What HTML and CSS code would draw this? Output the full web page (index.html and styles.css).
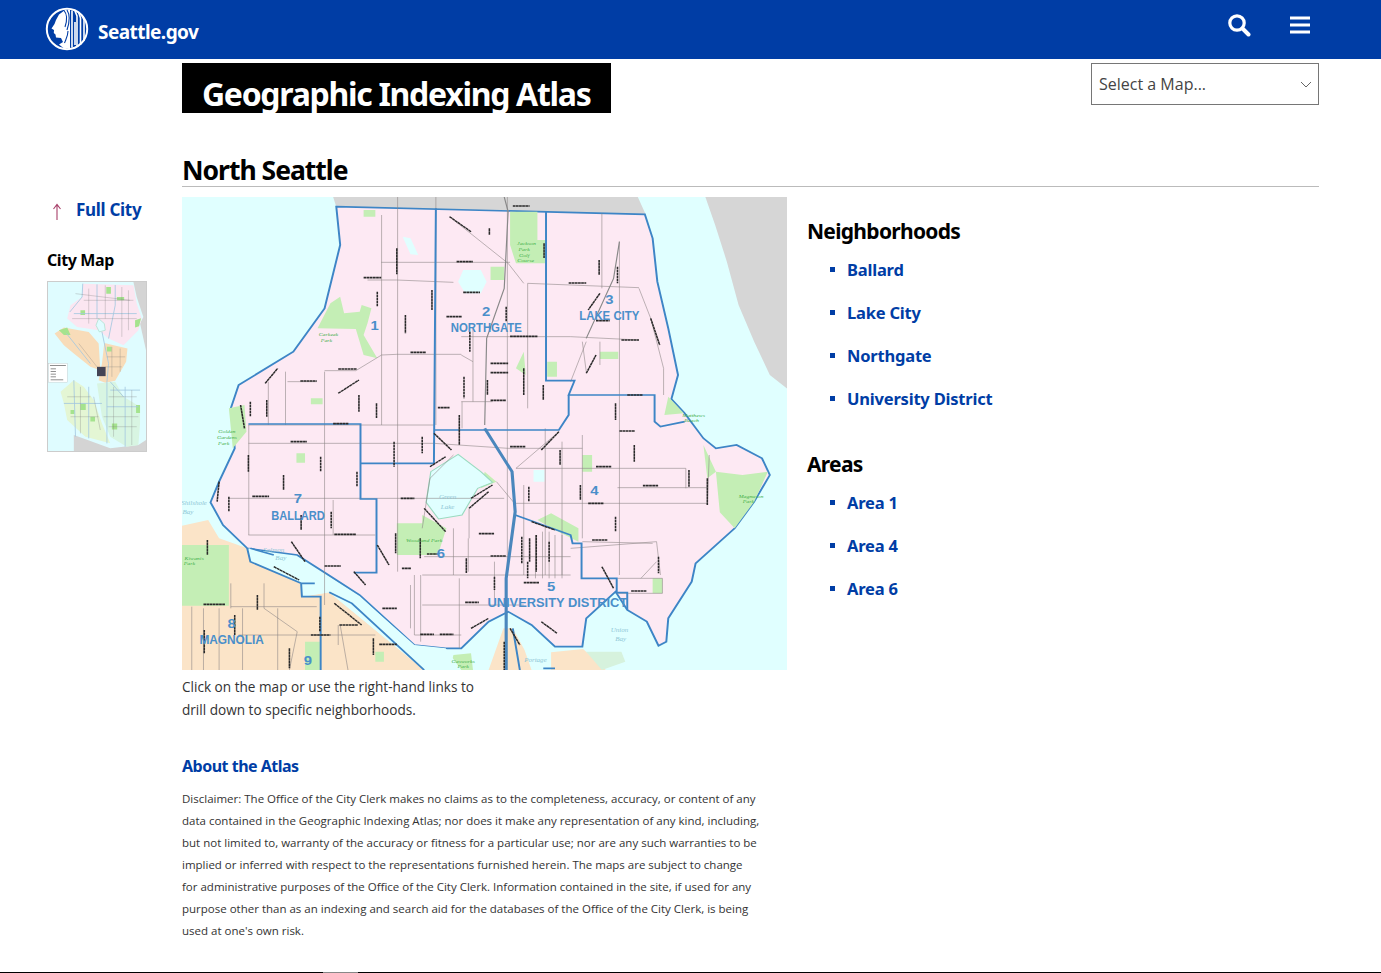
FILE: index.html
```html
<!DOCTYPE html>
<html lang="en">

<head>
    <meta charset="UTF-8">
    <meta name="viewport" content="width=device-width, initial-scale=1.0">
    <title>Geographic Indexing Atlas</title>
    <link rel="stylesheet" href="styles.css">
</head>

<body>
    <header class="topbar">
        <a class="brand" href="#">
            <svg class="seal" viewBox="0 0 44 44" width="44" height="44" aria-hidden="true">
                <circle cx="22" cy="22" r="20.2" fill="none" stroke="#fff" stroke-width="2"/>
                <path fill="#fff" d="M20 3 L14 7.5 L11 13 L9.5 17 L6.5 21.5 L9 23 L8.8 26 L10.5 27.5 L11 30.5 L16 31 L18 35 L14 37.5 L19 41.5 L25 41.5 L25 3 Z"/>
                <path fill="none" stroke="#003da5" stroke-width="1.1" d="M19 3.5 C23 8 22 14 20 20 M22 3 C26 9 24 17 22 23 M19.5 36 C21 32 23 29 23 24"/>
                <path fill="none" stroke="#fff" stroke-width="1.6" d="M27 3.5 V40.5 M30 4 L32 9 V40 M33.5 5 L35.5 11 V38 M37 8 L39 13 V34 M30 15 V38"/>
            </svg>
            <span class="brand-name">Seattle.gov</span>
        </a>
        <div class="topbar-icons">
            <svg viewBox="0 0 24 24" width="24" height="24" aria-hidden="true">
                <circle cx="10" cy="10" r="7.2" fill="none" stroke="#fff" stroke-width="3.2"/>
                <path d="M15.5 15.5 L21.5 21.5" stroke="#fff" stroke-width="4" stroke-linecap="round"/>
            </svg>
            <svg viewBox="0 0 20 18" width="20" height="18" aria-hidden="true">
                <path d="M0 2 H20 M0 9 H20 M0 16 H20" stroke="#fff" stroke-width="3"/>
            </svg>
        </div>
    </header>

    <div class="page">
        <aside class="sidebar">
            <a class="full-city" href="#">
                <svg class="arrow" viewBox="0 0 12 18" width="12" height="18" aria-hidden="true">
                    <path d="M6 17 V2 M2.5 6 L6 1.5 L9.500 6" fill="none" stroke="#a8406a" stroke-width="1.1"/>
                </svg>
                Full City
            </a>
            <h3 class="side-title">City Map</h3>
            <svg class="thumb" viewBox="52 275 296 508" width="100" height="171" preserveAspectRatio="none" aria-hidden="true">
                <rect x="52" y="275" width="296" height="508" fill="#dffcff"/>
                <path fill="#d4d4d4" d="M310 275 H348 V480 L330 400 L340 380 L320 320 Z M130 735 L240 775 L325 765 L348 750 V783 H130 Z"/>
                <path fill="#fbe6f1" d="M157 280 L310 285 L320 340 L335 385 L325 420 L280 465 L235 445 L205 420 L140 410 L110 385 L120 345 L155 320 Z"/>
                <path fill="#f8dcb9" d="M72 430 L100 412 L175 425 L205 460 L210 540 L180 530 L130 490 L100 465 Z M222 458 L292 475 L288 515 L255 572 L225 578 L205 570 L215 520 Z"/>
                <path fill="#e4f6d4" d="M90 605 L130 570 L160 590 L190 630 L215 700 L240 760 L165 740 L110 690 L100 640 Z"/>
                <path fill="#d8f5e2" d="M200 580 L255 575 L280 620 L330 650 L330 700 L325 765 L290 770 L240 740 L215 680 Z"/>
                <path fill="#a5e38e" d="M228 290 h14 v20 h-14 Z M260 320 h22 v10 h-22 Z M315 390 l18 -6 l-6 24 l-12 4 Z M85 420 l25 -8 l10 22 h-20 Z M150 640 h16 v20 h-16 Z M318 645 h12 v24 h-12 Z M245 700 h16 v18 h-16 Z M180 680 h14 v14 h-14 Z M150 360 h14 v14 h-14 Z M230 470 h14 v14 h-14 Z M120 660 h12 v12 h-12 Z"/>
                <path fill="#dffcff" stroke="#8fd5b8" stroke-width="1.5" d="M205 385 L222 400 L225 420 L207 425 L197 405 Z"/>
                <path fill="none" stroke="#a3c8df" stroke-width="2.500" d="M157 280 L155 320 L118 365 M200 282 V385 M255 284 V345 L235 445 M215 425 L235 520 L230 575 V760 M130 370 H320 M108 430 L180 520 M240 575 L280 620 M130 570 L135 740 M175 590 V745 M285 590 V770 M330 600 H240 M100 640 H215 M230 650 H325"/>
                <path fill="none" stroke="#7a7a7a" stroke-width=".9" d="M175 295 V400 M225 285 V385 M275 290 V440 M295 300 V420 M125 385 H320 M160 330 H310 M145 460 L200 530 M245 470 V560 M270 475 V545 M230 500 H285 M225 530 H275 M110 620 H180 M120 680 H205 M150 590 V730 M190 620 L210 720 M250 590 V740 M305 600 V765 M235 620 H320 M235 710 H320 M220 680 H325 M135 310 L300 330"/>
                <path fill="#445" d="M200 530 h26 v28 h-26 Z"/>
                <rect x="54" y="520" width="56" height="56" fill="#fff" stroke="#bbb"/>
                <path stroke="#555" stroke-width="2" d="M58 526 H106 M60 536 H76 M60 544 H76 M60 552 H76 M60 560 H76 M60 569 H98"/>
            </svg>
        </aside>

        <main class="content">
            <div class="title-row">
                <h1 class="atlas-title">Geographic Indexing Atlas</h1>
                <div class="map-select">
                    <select aria-label="Select a Map">
                        <option>Select a Map...</option>
                    </select>
                    <svg class="chevron" viewBox="0 0 12 7" width="12" height="7" aria-hidden="true">
                        <path d="M1 1 L6 6 L11 1" fill="none" stroke="#666" stroke-width="1"/>
                    </svg>
                </div>
            </div>

            <h2 class="region-title">North Seattle</h2>

            <div class="region">
                <div class="map-col">
                    <svg class="map" viewBox="5 6 1549 1419" width="605" height="473" preserveAspectRatio="none" aria-label="Map of North Seattle">
                        <rect x="0" y="0" width="1560" height="1430" fill="#e0ffff"/>
                        <!-- grey land -->
                        <path fill="#d6d6d6" d="M392 6 H1172 L1192 58 L400 35 Z M1345 6 H1556 V582 L1510 540 L1470 440 L1430 330 L1400 200 L1370 90 Z"/>
                        <!-- magnolia + queen anne side -->
                        <path fill="#fbe4c8" d="M5 992 L72 975 L100 1030 L172 1060 L180 1100 L310 1165 L312 1205 L382 1192 L625 1425 H5 Z M790 1425 L828 1300 L852 1300 L882 1365 L900 1425 Z M950 1425 V1372 L1032 1362 L1090 1425 Z"/>
                        <!-- north seattle land -->
                        <path fill="#fde9f3" stroke="#3d85c6" stroke-width="5" d="M400 35 L1190 58 L1210 130 L1222 260 L1250 400 L1275 540 L1258 612 L1292 655 L1340 730 L1372 760 L1425 750 L1490 790 L1510 840 L1470 920 L1420 1000 L1320 1105 L1310 1160 L1250 1270 L1245 1340 L1225 1352 L1195 1280 L1145 1245 L1115 1190 L1040 1270 L1030 1355 L960 1355 L900 1290 L840 1250 L790 1280 L720 1360 L680 1360 L600 1350 L460 1200 L380 1140 L300 1080 L172 1060 L110 990 L78 922 L100 860 L140 760 L130 640 L150 570 L290 470 L370 340 L410 150 Z"/>
                        <!-- parks -->
                        <path fill="#c4eeb5" d="M845 50 H915 V135 H935 V205 H860 L845 150 Z M352 400 L385 325 L410 305 L420 355 L460 350 L465 330 L490 340 L480 385 L470 420 L505 490 L470 480 L450 402 Z M555 985 H620 V960 L682 1000 L660 1080 H555 Z M1372 830 L1440 840 L1505 830 L1470 920 L1420 1000 L1382 952 Z M125 640 L165 630 L170 710 L135 760 Z M5 1050 H125 V1232 H5 Z M915 975 L950 955 L1020 1000 L1020 1040 L960 1005 Z M1075 470 H1122 V492 H1075 Z M1250 605 L1290 655 L1240 660 Z M298 775 h22 v28 h-22 Z M795 215 h35 v40 h-35 Z M335 610 h30 v18 h-30 Z M1030 780 h25 v50 h-25 Z M700 1380 L745 1375 L750 1425 H690 Z M320 1340 h38 v85 h-38 Z M780 830 L810 860 L770 880 Z M1210 1150 h25 v45 h-25 Z M500 1370 h22 v30 h-22 Z M470 45 h30 v20 h-30 Z M880 470 L860 520 L885 540 Z M940 500 h25 v45 h-25 Z M1340 750 L1372 830 L1350 850 Z"/>
                        <path fill="#d6f2dd" d="M1040 1370 L1130 1370 L1140 1400 L1080 1425 Z"/>
                        <!-- water inside land -->
                        <path fill="#e0ffff" stroke="#9adbc0" stroke-width="3" d="M712 778 L770 830 L800 862 L762 880 L722 960 L662 972 L630 922 L642 830 Z"/>
                        <path fill="#e0ffff" d="M570 125 L590 130 L610 180 L590 178 Z M905 825 h28 v35 h-28 Z M725 225 H770 L785 260 L770 295 H730 L712 260 Z"/>
                        <path fill="#e0ffff" d="M175 1060 L240 1075 L300 1090 L380 1145 L460 1205 L600 1350 L680 1360 L720 1425 H625 L382 1192 L312 1205 L310 1165 L180 1100 Z"/>
                        <!-- roads -->
                        <path fill="none" stroke="#8d8585" stroke-width="1.6" d="M516 60 V690 M557 6 V1130 M655 6 V690 M838 6 V1140 M1080 55 V280 M1125 140 V1140 M722 620 V700 M370 530 V1230 M176 690 V1020 M392 915 V1020 M270 530 V690 M226 560 V690 M750 400 V620 M890 265 V640 M935 700 V1140 M978 740 V1140 M1030 440 L1040 530 M1030 720 V1030 M1075 440 V510 M1175 280 L1205 370 L1238 520 V600 M700 1000 V1140 M738 1030 V1130 M880 870 V1140 M910 1020 V1150 M928 1010 V1150 M945 1010 V1150 M960 1020 V1150 M978 1020 V1150 M600 1140 V1320 M616 1140 V1340 M715 1150 V1360 M590 1170 V1300 M805 1100 V1210 M175 745 L225 745 H650 L840 760 H1030 M515 202 H845 M480 255 H555 L700 262 M890 265 L1175 278 M720 425 H1000 L1175 435 M555 478 H720 M370 527 H450 L516 480 L555 478 M275 560 H350 M175 690 H650 M860 820 H1295 M1120 878 H1350 M125 910 H830 M860 925 H1350 M175 1020 H500 M625 1085 H1000 M620 1140 H1000 M1030 1040 L1210 1045 M720 620 H800 M1120 1150 H1235 V1195 H1120 M620 1230 H880 M600 1320 H720 M130 1235 H350 M150 1320 H500 M405 1290 V1350 M215 1240 L300 1310 L280 1425 M130 1165 V1240 M30 1235 V1425 M880 265 L840 205 M750 500 L720 480 M1000 560 L1040 440 M1295 820 V880 M1355 780 L1350 930 M700 780 L640 850 L620 1000 M860 820 L960 720 M810 860 L860 930 M740 940 L740 1030 M1000 1060 L1220 1040 L1230 1140 M1180 1150 L1220 1100 M690 65 L840 205 M215 1165 V1240 M60 1240 V1425 M100 1240 V1425 M160 1240 V1425 M250 1240 V1425 M410 1290 L430 1425"/>
                        <path fill="none" stroke="#888" stroke-width="3" d="M830 6 L840 50 L830 280 L785 430 L780 690 M1125 140 L1110 250 L1040 430"/>
                        <!-- boundaries -->
                        <path fill="none" stroke="#3d85c6" stroke-width="5" d="M655 40 L650 805 H462 V687 H175 M937 50 V557 H1010 L995 600 H1215 V680 L1230 695 L1292 680 M995 600 V660 L970 705 H650 M462 805 V912 H503 V1133 H445 M858 960 L1000 1020 L1005 1045 H1028 V1150 H1118 V1193 H1145 V1245 M172 1060 L180 1100 L310 1165 L312 1205 H360 V1425 M310 1165 H345 M180 1060 L240 1080 M382 1192 L440 1225 L625 1425 M870 1425 L852 1300 M930 1420 H960"/>
                        <path fill="none" stroke="#4a87bd" stroke-width="8" d="M780 700 L850 830 L858 950 L835 1150 V1425"/>
                        <!-- street labels -->
                        <path class="street h" d="M470 248 h45 M708 200 h42 M725 292 h43 M682 365 h40 M590 472 h40 M405 522 h47 M308 558 h42 M392 686 h40 M283 740 h42 M845 755 h40 M845 424 h70 M1130 435 h45 M995 264 h45 M1065 377 h35 M1145 600 h40 M1125 708 h40 M1065 815 h40 M1185 872 h40 M1045 925 h40 M1055 1035 h40 M185 904 h43 M395 1018 h55 M370 1113 h42 M765 1016 h40 M565 910 h35 M632 1077 h28 M795 1083 h40 M568 1120 h24 M880 1163 h40 M730 1222 h35 M518 1240 h37 M1155 1188 h40 M60 1228 h55 M335 1320 h50 M615 1318 h35 M665 1318 h35 M510 1348 h45 M408 1290 h47 M660 638 h30 M795 505 h45 M795 533 h45 M795 616 h40 M852 33 h43"/>
                        <path class="street" d="M555 160 v78 M505 290 v45 M645 285 v60 M577 360 v55 M742 410 v60 M835 335 v45 M1073 195 v45 M1120 215 v50 M932 145 v45 M792 100 v20 M727 545 v65 M787 555 v45 M880 520 v80 M930 570 v45 M458 600 v50 M503 625 v45 M222 615 v50 M180 620 v45 M175 780 v50 M265 840 v45 M360 785 v45 M453 830 v45 M125 905 v45 M548 740 v75 M620 725 v50 M715 660 v90 M973 765 v45 M893 875 v45 M1025 870 v45 M1115 625 v50 M1163 750 v50 M1303 825 v50 M1350 850 v80 M1115 965 v45 M310 960 v45 M387 950 v50 M552 1015 v60 M615 1030 v60 M733 1090 v45 M805 1145 v40 M890 1100 v50 M945 1040 v60 M70 1035 v45 M140 1260 v60 M62 1305 v70 M198 1200 v45 M280 1360 v60 M358 1265 v45 M495 1330 v50 M1225 1085 v50 M875 1025 v80 M895 1030 v70 M912 1020 v110"/>
                        <path class="street" d="M690 65 L745 110 M405 595 L458 555 M218 565 L250 520 M1075 295 L1045 345 M1205 370 L1228 450 M1040 535 L1065 480 M925 765 L970 710 M650 715 L695 765 M640 815 L680 785 M1080 1115 L1110 1180 M900 980 L960 1005 M285 1040 L320 1100 M445 1130 L475 1170 M240 1115 L305 1155 M395 1225 L465 1290 M625 940 L680 1010 M745 910 L800 870 M740 940 L790 890 M505 1050 L535 1110 M745 1300 L790 1270 M925 1280 L965 1315 M155 630 L165 700 M100 860 L95 920 M845 1300 L870 1350 M830 1340 V1425"/>
                        <!-- labels -->
                        <g class="map-num">
                            <text x="498" y="405">1</text>
                            <text x="784" y="362">2</text>
                            <text x="1099" y="327">3</text>
                            <text x="1061" y="900">4</text>
                            <text x="950" y="1188">5</text>
                            <text x="668" y="1088">6</text>
                            <text x="302" y="925">7</text>
                            <text x="132" y="1300">8</text>
                            <text x="327" y="1410">9</text>
                        </g>
                        <g class="map-name">
                            <text x="784" y="411" textLength="182" lengthAdjust="spacingAndGlyphs">NORTHGATE</text>
                            <text x="1099" y="376" textLength="154" lengthAdjust="spacingAndGlyphs">LAKE CITY</text>
                            <text x="302" y="974" textLength="137" lengthAdjust="spacingAndGlyphs">BALLARD</text>
                            <text x="966" y="1237" textLength="358" lengthAdjust="spacingAndGlyphs">UNIVERSITY DISTRICT</text>
                            <text x="132" y="1347" textLength="165" lengthAdjust="spacingAndGlyphs">MAGNOLIA</text>
                        </g>
                        <g class="map-park">
                            <text x="887" y="150">Jackson</text>
                            <text x="881" y="168">Park</text>
                            <text x="881" y="185">Golf</text>
                            <text x="885" y="202">Course</text>
                            <text x="380" y="423">Carkeek</text>
                            <text x="375" y="440">Park</text>
                            <text x="120" y="715">Golden</text>
                            <text x="120" y="732">Gardens</text>
                            <text x="112" y="750">Park</text>
                            <text x="625" y="1040">Woodland Park</text>
                            <text x="1462" y="908">Magnuson</text>
                            <text x="1455" y="925">Park</text>
                            <text x="1315" y="665">Matthews</text>
                            <text x="1310" y="682">Beach</text>
                            <text x="36" y="1095">Kiwanis</text>
                            <text x="24" y="1110">Park</text>
                            <text x="725" y="1405">Gasworks</text>
                            <text x="725" y="1420">Park</text>
                        </g>
                        <g class="map-water">
                            <text x="685" y="912">Green</text>
                            <text x="685" y="942">Lake</text>
                            <text x="36" y="930">Shilshole</text>
                            <text x="20" y="958">Bay</text>
                            <text x="1125" y="1310">Union</text>
                            <text x="1128" y="1338">Bay</text>
                            <text x="240" y="1072">Salmon</text>
                            <text x="258" y="1095">Bay</text>
                            <text x="910" y="1402">Portage</text>
                        </g>
                    </svg>
                    <p class="caption">Click on the map or use the right-hand links to<br>drill down to specific neighborhoods.</p>
                    <a class="about" href="#">About the Atlas</a>
                    <p class="disclaimer">Disclaimer: The Office of the City Clerk makes no claims as to the completeness, accuracy, or content of any data contained in the Geographic Indexing Atlas; nor does it make any representation of any kind, including, but not limited to, warranty of the accuracy or fitness for a particular use; nor are any such warranties to be implied or inferred with respect to the representations furnished herein. The maps are subject to change for administrative purposes of the Office of the City Clerk. Information contained in the site, if used for any purpose other than as an indexing and search aid for the databases of the Office of the City Clerk, is being used at one's own risk.</p>
                </div>

                <nav class="links">
                    <h3 class="links-title">Neighborhoods</h3>
                    <ul class="link-list">
                        <li><a href="#">Ballard</a></li>
                        <li><a href="#">Lake City</a></li>
                        <li><a href="#">Northgate</a></li>
                        <li><a href="#">University District</a></li>
                    </ul>
                    <h3 class="links-title">Areas</h3>
                    <ul class="link-list">
                        <li><a href="#">Area 1</a></li>
                        <li><a href="#">Area 4</a></li>
                        <li><a href="#">Area 6</a></li>
                    </ul>
                </nav>
            </div>
        </main>
    </div>

    <footer class="footer-line"></footer>
</body>

</html>
```

FILE: styles.css
```css
* {
    box-sizing: border-box;
    margin: 0;
    padding: 0;
}

html,
body {
    height: 973px;
    overflow: hidden;
}

body {
    background: #fff;
    color: #333;
    font-family: 'Open Sans', 'Noto Sans', sans-serif;
    font-size: 13.6px;
    display: flex;
    flex-direction: column;
}

a {
    color: #003da5;
    text-decoration: none;
}

.topbar {
    height: 59px;
    flex: none;
    background: #003da5;
    display: flex;
    justify-content: space-between;
    padding: 7px 71px 0 45px;
}

.brand {
    display: flex;
    align-items: flex-start;
    gap: 9px;
    color: #fff;
}

.brand-name {
    font-family: 'Noto Sans', sans-serif;
    font-weight: 700;
    font-size: 19px;
    letter-spacing: -0.55px;
    line-height: 50px;
}

.topbar-icons {
    display: flex;
    gap: 39px;
    align-items: flex-start;
    padding-top: 6px;
}

.topbar-icons svg:last-child {
    margin-top: 3px;
}

.page {
    flex: 1;
    display: flex;
    min-height: 0;
}

.sidebar {
    width: 182px;
    flex: none;
    padding: 139px 0 0 47px;
}

.full-city {
    display: flex;
    align-items: center;
    gap: 13px;
    padding-left: 4px;
    font-family: 'Noto Sans', sans-serif;
    font-weight: 700;
    font-size: 17px;
    line-height: 24px;
    letter-spacing: -0.3px;
}

.arrow {
    flex: none;
    margin-top: 3px;
}

.side-title {
    margin-top: 27px;
    color: #000;
    font-family: 'Noto Sans', sans-serif;
    font-size: 16px;
    font-weight: 700;
    line-height: 22px;
    letter-spacing: -0.4px;
}

.thumb {
    display: block;
    margin-top: 10px;
    border: 1px solid #ccc;
}

.content {
    flex: 1;
    padding: 4px 62px 0 0;
}

.title-row {
    display: flex;
    justify-content: space-between;
    align-items: flex-start;
}

.atlas-title {
    width: 429px;
    height: 50px;
    padding-left: 20px;
    background: #000;
    color: #fff;
    font-family: 'Noto Sans', sans-serif;
    font-size: 32px;
    font-weight: 700;
    line-height: 62px;
    letter-spacing: -1.3px;
    white-space: nowrap;
}

.map-select {
    position: relative;
    width: 228px;
}

.map-select select {
    width: 100%;
    height: 42px;
    padding-left: 7px;
    border: 1px solid #767676;
    border-radius: 0;
    background: #fff;
    color: #444;
    font-family: 'Open Sans', sans-serif;
    font-size: 16px;
    appearance: none;
}

.chevron {
    position: absolute;
    right: 7px;
    top: 18px;
}

.region-title {
    margin-top: 39px;
    height: 35px;
    border-bottom: 1px solid #bbb;
    color: #000;
    font-family: 'Noto Sans', sans-serif;
    font-size: 26.5px;
    font-weight: 700;
    line-height: 36px;
    letter-spacing: -1px;
}

.region {
    display: flex;
    gap: 20px;
    padding-top: 10px;
}

.map-col {
    width: 605px;
    flex: none;
}

.map {
    display: block;
}

.street {
    fill: none;
    stroke: #2a2a2a;
    stroke-width: 4;
    stroke-dasharray: 8 1;
}

.street.h {
    stroke-width: 5;
    stroke-dasharray: 7 1;
}

.map-num text {
    fill: #4a8fca;
    font: 700 38px 'Liberation Sans', sans-serif;
    text-anchor: middle;
}

.map-name text {
    fill: #4a8fca;
    font: 700 38px 'Liberation Sans', sans-serif;
    text-anchor: middle;
}

.map-park text {
    fill: #3fae49;
    font: italic 15px 'Liberation Serif', serif;
    text-anchor: middle;
}

.map-water text {
    fill: #8fc6d6;
    font: italic 18px 'Liberation Serif', serif;
    text-anchor: middle;
}

.caption {
    margin-top: 5px;
    line-height: 23px;
    color: #333;
}

.about {
    display: block;
    margin-top: 33px;
    font-family: 'Noto Sans', sans-serif;
    font-size: 16px;
    font-weight: 700;
    line-height: 24px;
    letter-spacing: -0.5px;
}

.disclaimer {
    margin-top: 10px;
    width: 578px;
    font-size: 11.5px;
    line-height: 22px;
    color: #333;
}

.links {
    padding-top: 19px;
}

.links-title {
    color: #000;
    font-family: 'Noto Sans', sans-serif;
    font-size: 21px;
    font-weight: 700;
    line-height: 30px;
    letter-spacing: -0.7px;
}

.link-list {
    list-style: none;
    margin: 2px 0 29px;
}

.link-list li {
    display: flex;
    align-items: center;
    height: 43px;
    padding-left: 25px;
    position: relative;
}

.link-list li::before {
    content: "";
    position: absolute;
    left: 23px;
    top: 19px;
    width: 5px;
    height: 5px;
    background: #003da5;
}

.link-list a {
    margin-left: 15px;
    font-family: 'Noto Sans', sans-serif;
    font-size: 16.5px;
    font-weight: 700;
    letter-spacing: -0.2px;
}

.footer-line {
    height: 1px;
    flex: none;
    background: linear-gradient(to right, #000 323px, #888 323px, #888 358px, #000 358px);
}
```
